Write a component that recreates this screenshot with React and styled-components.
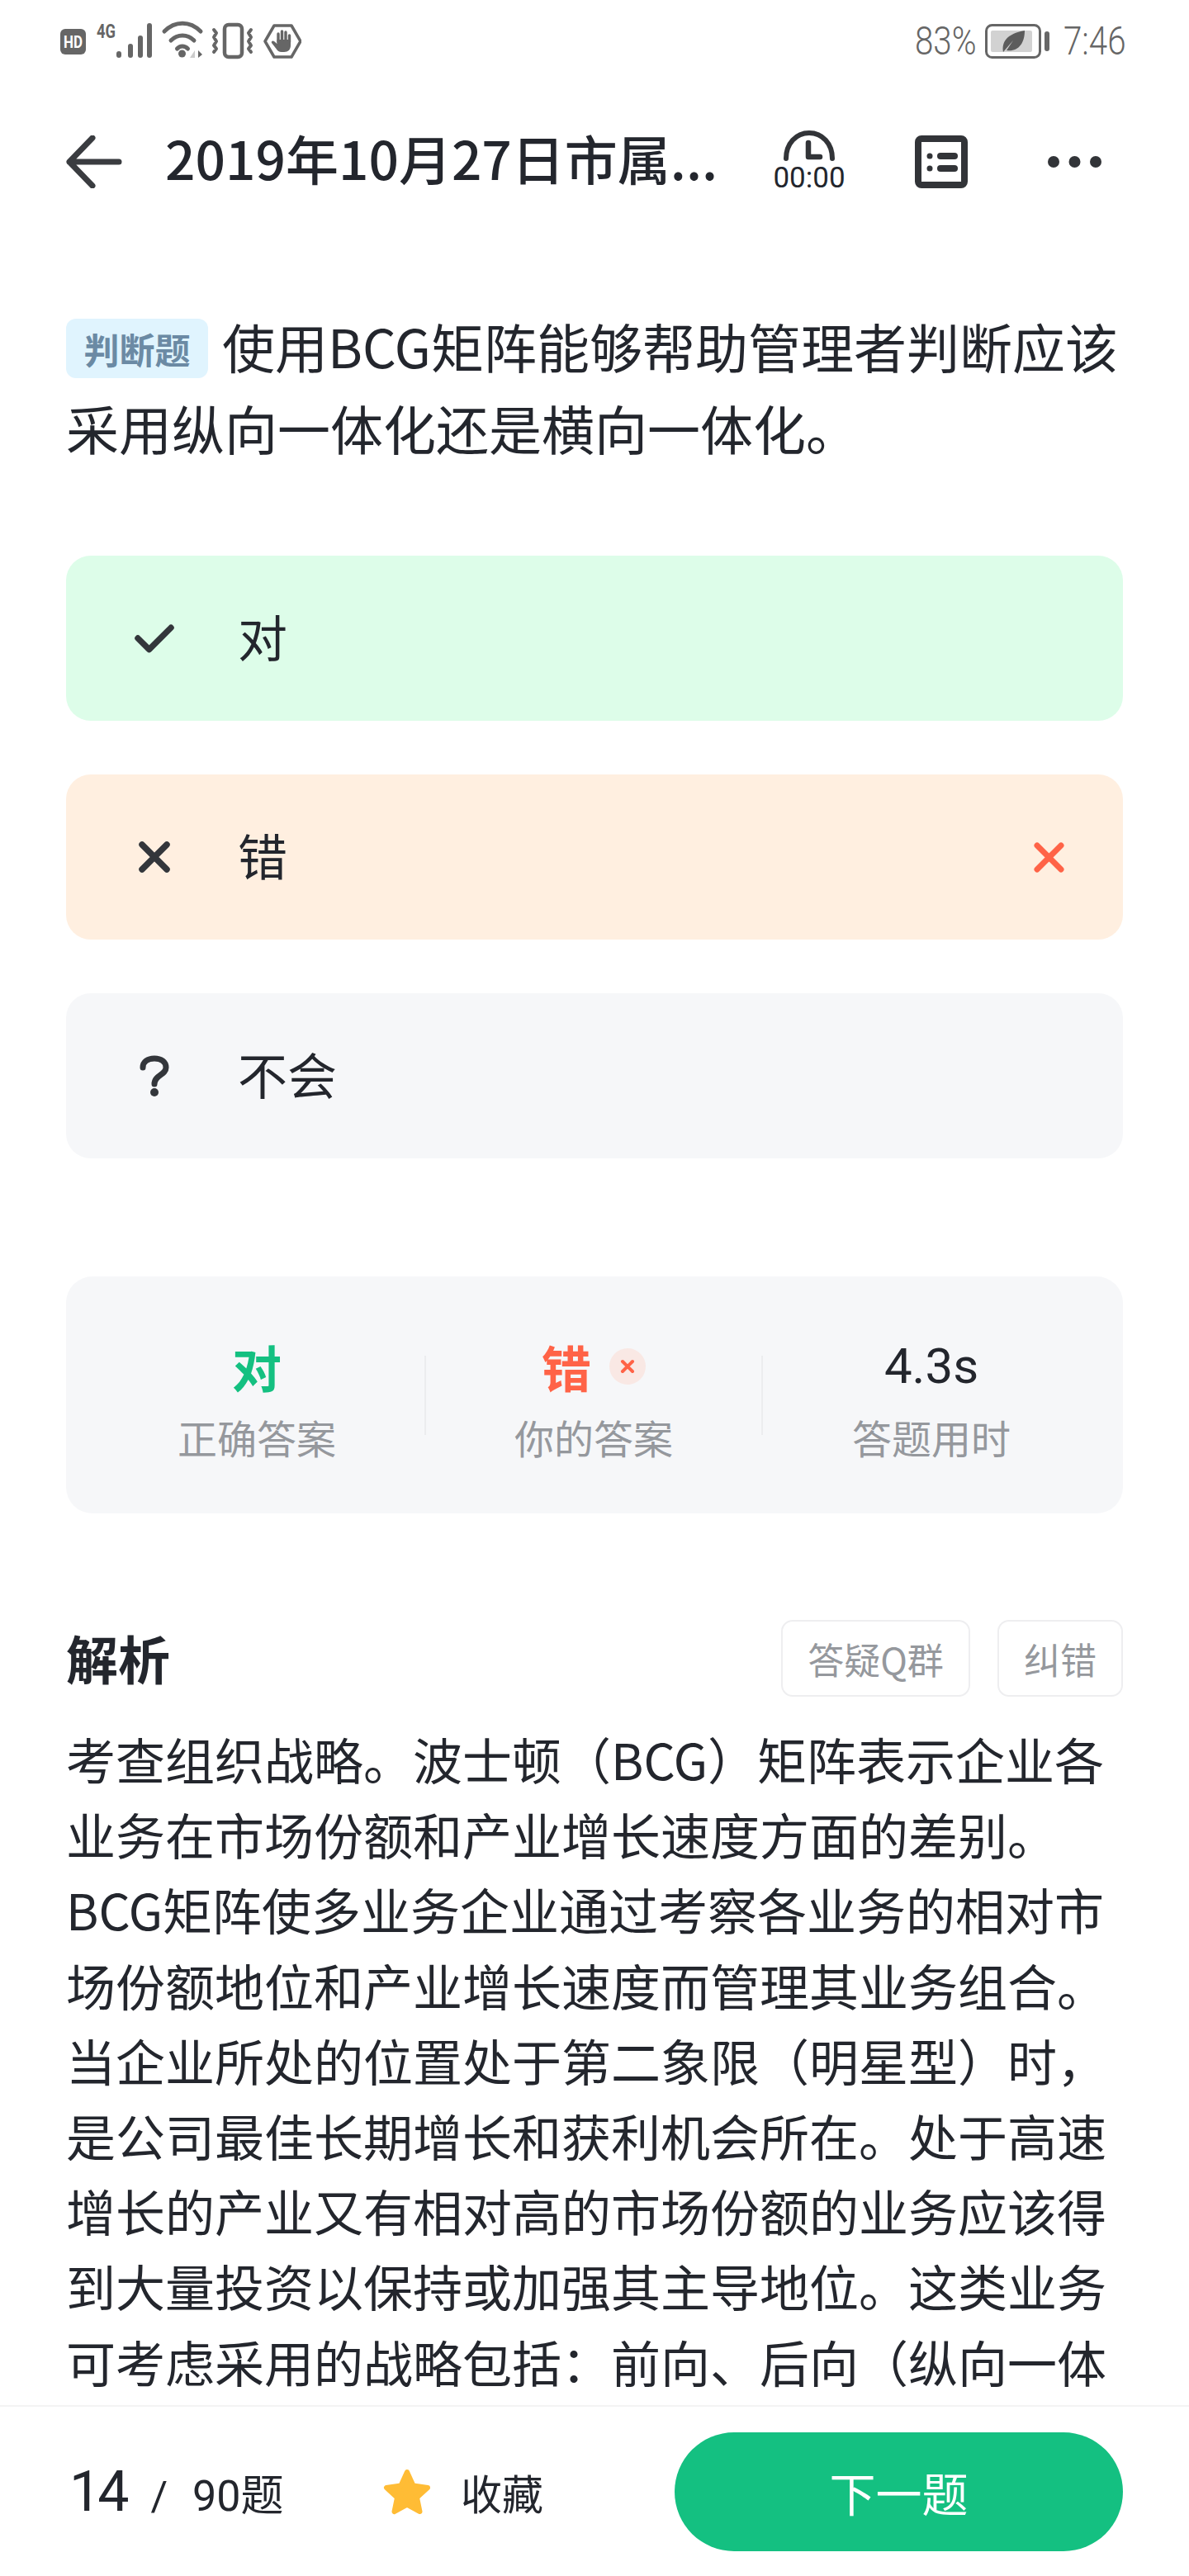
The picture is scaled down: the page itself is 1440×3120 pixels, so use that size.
import React from 'react';
import styled, { createGlobalStyle } from 'styled-components';

const GlobalStyle = createGlobalStyle`
    html, body {
        margin: 0;
        padding: 0;
        background: #fff;
    }
    * {
        box-sizing: border-box;
    }
`;

const Page = styled.div`
    width: 1440px;
    height: 3120px;
    display: flex;
    flex-direction: column;
    overflow: hidden;
    background: #fff;
    color: #23262d;
    font-family: "Noto Sans CJK SC", "Noto Sans", sans-serif;
`;

const StatusBar = styled.div`
    height: 100px;
    flex: none;
    display: flex;
    justify-content: space-between;
    align-items: flex-start;
    padding: 18px 76px 0 73px;
    color: #666;
`;
const StatusIcons = styled.div`
    display: flex;
    align-items: flex-start;
`;
const StatusRight = styled.div`
    display: flex;
    align-items: center;
    height: 44px;
    margin-top: 10px;
`;
const StatusText = styled.span`
    display: block;
    width: ${(p) => p.$w}px;
    margin-left: ${(p) => p.$left || 0}px;
    font-family: Roboto, sans-serif;
    font-weight: 300;
    font-size: 48px;
    line-height: 44px;
    white-space: nowrap;
    transform: scaleX(0.84);
    transform-origin: left center;
`;
const BatteryWrap = styled.div`
    display: flex;
    margin-left: 10px;
`;

const Header = styled.div`
    height: 136px;
    flex: none;
    display: flex;
    align-items: center;
    padding: 56px 106px 0 80px;
`;
const Title = styled.div`
    margin: 0 0 12px 52px;
    width: 688px;
    font-size: 64px;
    font-weight: 500;
    line-height: 80px;
    white-space: nowrap;
`;
const TimerBox = styled.div`
    margin-left: 50px;
    width: 84px;
    display: flex;
    flex-direction: column;
    align-items: center;
`;
const TimerText = styled.div`
    font-family: Roboto, sans-serif;
    font-size: 35px;
    line-height: 36px;
    margin-top: 2px;
`;
const HeaderIcon = styled.div`
    margin-left: ${(p) => p.$left}px;
    display: flex;
`;

const Body = styled.div`
    flex: 1;
    min-height: 0;
    overflow: hidden;
    padding: 136px 80px 0;
`;

const Question = styled.div`
    font-size: 64px;
    line-height: 99px;
    height: 198px;
`;
const QuestionLine = styled.div`
    display: flex;
    align-items: center;
    height: 99px;
    white-space: nowrap;
`;
const QuestionText = styled.span`
    margin-top: -6px;
`;
const TypeTag = styled.span`
    display: flex;
    align-items: center;
    justify-content: center;
    flex: none;
    width: 172px;
    height: 72px;
    margin-right: 17px;
    border-radius: 12px;
    background: #e0f4fe;
    color: #6b8aa4;
    font-size: 43px;
    font-weight: 700;
    line-height: 72px;
`;

const Options = styled.div`
    display: flex;
    flex-direction: column;
    gap: 65px;
    margin-top: 103px;
`;
const Option = styled.div`
    height: 200px;
    display: flex;
    align-items: center;
    padding: 0 71px 0 83px;
    border-radius: 30px;
    background: ${(p) => p.$bg};
    font-size: 60px;
`;
const OptionIcon = styled.div`
    width: 48px;
    display: flex;
    justify-content: center;
    margin-right: 77px;
    color: #33363b;
`;
const OptionText = styled.div`
    flex: 1;
    margin-top: -8px;
`;

const Stats = styled.div`
    height: 287px;
    margin-top: 143px;
    display: grid;
    grid-template-columns: repeat(3, 408px);
    align-items: center;
    padding: 0 28px;
    border-radius: 32px;
    background: #f6f7f9;
`;
const StatCol = styled.div`
    height: 96px;
    display: flex;
    flex-direction: column;
    align-items: center;
    border-right: ${(p) => (p.$last ? 'none' : '2px solid #ecedef')};
`;
const StatValue = styled.div`
    flex: none;
    height: 80px;
    margin-top: -27px;
    display: flex;
    align-items: center;
    gap: 22px;
    font-size: 60px;
    font-weight: 700;
    color: ${(p) => p.$color};
    ${(p) => p.$plain && 'font-family: Roboto, sans-serif; font-weight: 400; font-size: 60px;'}
`;
const WrongDot = styled.span`
    width: 44px;
    height: 44px;
    display: flex;
    align-items: center;
    justify-content: center;
    border-radius: 50%;
    background: #f9e8e4;
`;
const StatLabel = styled.div`
    flex: none;
    margin-top: 14px;
    font-size: 48px;
    line-height: 62px;
    color: #95989d;
    white-space: nowrap;
`;

const SectionHead = styled.div`
    margin-top: 129px;
    height: 93px;
    display: flex;
    align-items: center;
`;
const SectionTitle = styled.div`
    flex: 1;
    margin-bottom: 4px;
    font-size: 63px;
    font-weight: 700;
`;
const LinkBtn = styled.div`
    width: ${(p) => p.$w}px;
    height: 93px;
    margin-left: ${(p) => p.$left || 0}px;
    display: flex;
    align-items: center;
    justify-content: center;
    border: 2px solid #eeeef0;
    border-radius: 14px;
    color: #95989d;
    font-size: 44px;
`;

const Analysis = styled.div`
    margin-top: 29px;
    font-size: 60px;
    line-height: 91.2px;
`;
const AnalysisLine = styled.div`
    white-space: nowrap;
`;

const BottomBar = styled.div`
    height: 207px;
    flex: none;
    display: flex;
    align-items: center;
    padding: 0 80px 0 84px;
    background: #fff;
    border-top: 2px solid #f3f3f3;
`;
const Progress = styled.div`
    width: 380px;
    display: flex;
    align-items: baseline;
    font-family: Roboto, sans-serif;
`;
const ProgressNow = styled.span`
    font-size: 68px;
    letter-spacing: -4px;
`;
const ProgressSlash = styled.span`
    font-size: 50px;
    margin: 0 30px;
`;
const ProgressTotal = styled.span`
    font-size: 52px;
    font-family: Roboto, "Noto Sans CJK SC", sans-serif;
`;
const Favorite = styled.div`
    flex: 1;
    display: flex;
    align-items: center;
    gap: 36px;
    font-size: 50px;
`;
const NextBtn = styled.div`
    width: 543px;
    height: 144px;
    display: flex;
    align-items: center;
    justify-content: center;
    border-radius: 72px;
    background: #14c081;
    color: #fff;
    font-size: 56px;
`;

const analysisLines = [
    '考查组织战略。波士顿（BCG）矩阵表示企业各',
    '业务在市场份额和产业增长速度方面的差别。',
    'BCG矩阵使多业务企业通过考察各业务的相对市',
    '场份额地位和产业增长速度而管理其业务组合。',
    '当企业所处的位置处于第二象限（明星型）时，',
    '是公司最佳长期增长和获利机会所在。处于高速',
    '增长的产业又有相对高的市场份额的业务应该得',
    '到大量投资以保持或加强其主导地位。这类业务',
    '可考虑采用的战略包括：前向、后向（纵向一体',
];

function StatusLeftIcons() {
    return (
        <StatusIcons>
            <svg width="292" height="64" viewBox="0 -10 292 64" fill="none">
                <rect x="0" y="7" width="31" height="31" rx="6" fill="#666" />
                <text x="15.5" y="29.5" fontFamily="Roboto" fontSize="20" fontWeight="700" fill="#fff" textAnchor="middle" textLength="23" lengthAdjust="spacingAndGlyphs">HD</text>
                <text x="44" y="18" fontFamily="Roboto" fontSize="24" fontWeight="700" fill="#666" textLength="23" lengthAdjust="spacingAndGlyphs">4G</text>
                <g fill="#666">
                    <rect x="68" y="34" width="6" height="8" rx="3" />
                    <rect x="82" y="25" width="6" height="17" rx="3" />
                    <rect x="94" y="15" width="6" height="27" rx="3" />
                    <rect x="105" y="0" width="6" height="42" rx="3" />
                </g>
                <g stroke="#666" strokeWidth="5" strokeLinecap="round">
                    <path d="M126 10c13-13 31-13 44 0" />
                    <path d="M134 21c8-8 20-8 28 0" />
                    <path d="M141.500 31c3.500-4 9-4 13 0" />
                </g>
                <circle cx="147.500" cy="37" r="4.500" fill="#666" />
                <path d="M163 42v-9l-6 9z" fill="#ccc" />
                <path d="M167 42v-9l5 5z" fill="#666" />
                <rect x="199" y="2" width="21" height="39" rx="5" stroke="#666" strokeWidth="4.500" />
                <path d="M186 8l3 4-3 5 3 5-3 5 3 4-3 4M231 8l-3 4 3 5-3 5 3 5-3 4 3 4" stroke="#666" strokeWidth="4" strokeLinecap="round" strokeLinejoin="round" />
                <path d="M259 3h21l11 19-11 19h-21l-11-19z" stroke="#666" strokeWidth="3.500" strokeLinejoin="round" />
                <path d="M264 23v-10M268.500 21V10M273 21V11M277.500 23V15" stroke="#666" strokeWidth="3.400" strokeLinecap="round" />
                <path d="M262.500 20h16.500v7c0 5-3 8-8 8h-3c-3 0-5-1.500-6.500-4l-5.500-7c-1-2 1.500-3.500 3-2l3.500 3z" fill="#666" />
            </svg>
        </StatusIcons>
    );
}

function BatteryIcon() {
    return (
        <svg width="79" height="42" viewBox="0 0 79 42" fill="none">
            <rect x="1.5" y="1.5" width="65" height="39" rx="7" stroke="#666" strokeWidth="3" />
            <rect x="7" y="8" width="50" height="26" rx="2" fill="#d2d2d2" />
            <rect x="72" y="9" width="6" height="24" rx="3" fill="#666" />
            <path d="M22 34c-2-12 4-22 26-26 0 16-8 26-22 24l8-12-12 14z" fill="#5c5c5c" />
        </svg>
    );
}

export default function App() {
    return (
        <Page>
            <GlobalStyle />
            <StatusBar>
                <StatusLeftIcons />
                <StatusRight>
                    <StatusText $w={75}>83%</StatusText>
                    <BatteryWrap>
                        <BatteryIcon />
                    </BatteryWrap>
                    <StatusText $w={76} $left={16}>7:46</StatusText>
                </StatusRight>
            </StatusBar>
            <Header>
                <svg width="68" height="64" viewBox="0 0 68 64" fill="none" stroke="#3a3c40" strokeWidth="7" strokeLinecap="round" strokeLinejoin="round">
                    <path d="M32 3L4 32l28 29M4 32h60" />
                </svg>
                <Title>2019年10月27日市属...</Title>
                <TimerBox>
                    <svg width="64" height="38" viewBox="0 0 64 38" fill="none" stroke="#323438" strokeLinecap="round" strokeLinejoin="round">
                        <path d="M4 34C4 16 16 3 32 3s28 13 28 31" strokeWidth="6" />
                        <path d="M31 15v17h14" strokeWidth="6.5" />
                    </svg>
                    <TimerText>00:00</TimerText>
                </TimerBox>
                <HeaderIcon $left={86}>
                    <svg width="64" height="64" viewBox="0 0 64 64" fill="none">
                        <rect x="4" y="4" width="56" height="56" rx="4" stroke="#323438" strokeWidth="8" />
                        <circle cx="18" cy="25" r="3.5" fill="#323438" />
                        <circle cx="18" cy="40" r="3.5" fill="#323438" />
                        <rect x="27" y="21" width="25" height="8" rx="4" fill="#323438" />
                        <rect x="27" y="36" width="25" height="8" rx="4" fill="#323438" />
                    </svg>
                </HeaderIcon>
                <HeaderIcon $left={97}>
                    <svg width="65" height="14" viewBox="0 0 65 14" fill="#323438">
                        <circle cx="7" cy="7" r="7" />
                        <circle cx="32.5" cy="7" r="7" />
                        <circle cx="58" cy="7" r="7" />
                    </svg>
                </HeaderIcon>
            </Header>
            <Body>
                <Question>
                    <QuestionLine>
                        <TypeTag>判断题</TypeTag>
                        <QuestionText>使用BCG矩阵能够帮助管理者判断应该</QuestionText>
                    </QuestionLine>
                    <QuestionLine>
                        <QuestionText>采用纵向一体化还是横向一体化。</QuestionText>
                    </QuestionLine>
                </Question>
                <Options>
                    <Option $bg="#ddfde9">
                        <OptionIcon>
                            <svg width="49" height="36" viewBox="0 0 49 36" fill="none" stroke="#33363b" strokeWidth="7.5" strokeLinecap="round" strokeLinejoin="round">
                                <path d="M4 18l14 14L45 5" />
                            </svg>
                        </OptionIcon>
                        <OptionText>对</OptionText>
                    </Option>
                    <Option $bg="#ffefe0">
                        <OptionIcon>
                            <svg width="38" height="38" viewBox="0 0 38 38" fill="none" stroke="#33363b" strokeWidth="7.5" strokeLinecap="round">
                                <path d="M4 4l30 30M34 4L4 34" />
                            </svg>
                        </OptionIcon>
                        <OptionText>错</OptionText>
                        <svg width="37" height="37" viewBox="0 0 37 37" fill="none" stroke="#ff6347" strokeWidth="7" strokeLinecap="round">
                            <path d="M4 4l29 29M33 4L4 33" />
                        </svg>
                    </Option>
                    <Option $bg="#f6f7f9">
                        <OptionIcon>
                            <svg width="36" height="50" viewBox="0 0 36 50" fill="none">
                                <path d="M4 15C4 8 10 4 18 4s14 4 14 11c0 9-14 9-14 20" stroke="#33363b" strokeWidth="7" strokeLinecap="round" />
                                <circle cx="18" cy="45" r="5" fill="#33363b" />
                            </svg>
                        </OptionIcon>
                        <OptionText>不会</OptionText>
                    </Option>
                </Options>
                <Stats>
                    <StatCol>
                        <StatValue $color="#14c081">对</StatValue>
                        <StatLabel>正确答案</StatLabel>
                    </StatCol>
                    <StatCol>
                        <StatValue $color="#ff6347">
                            错
                            <WrongDot>
                                <svg width="18" height="18" viewBox="0 0 18 18" fill="none" stroke="#ff6347" strokeWidth="4" strokeLinecap="round">
                                    <path d="M3 3l12 12M15 3L3 15" />
                                </svg>
                            </WrongDot>
                        </StatValue>
                        <StatLabel>你的答案</StatLabel>
                    </StatCol>
                    <StatCol $last>
                        <StatValue $color="#23262d" $plain>4.3s</StatValue>
                        <StatLabel>答题用时</StatLabel>
                    </StatCol>
                </Stats>
                <SectionHead>
                    <SectionTitle>解析</SectionTitle>
                    <LinkBtn $w={229}>答疑Q群</LinkBtn>
                    <LinkBtn $w={152} $left={33}>纠错</LinkBtn>
                </SectionHead>
                <Analysis>
                    {analysisLines.map((line) => (
                        <AnalysisLine key={line}>{line}</AnalysisLine>
                    ))}
                </Analysis>
            </Body>
            <BottomBar>
                <Progress>
                    <ProgressNow>14</ProgressNow>
                    <ProgressSlash>/</ProgressSlash>
                    <ProgressTotal>90题</ProgressTotal>
                </Progress>
                <Favorite>
                    <svg width="58" height="56" viewBox="0 0 58 56" fill="#ffbc35" stroke="#ffbc35" strokeWidth="6" strokeLinejoin="round">
                        <path d="M29 4l7.5 16.5L54 23 41 35l3.5 17L29 43.5 13.5 52 17 35 4 23l17.5-2.5z" />
                    </svg>
                    收藏
                </Favorite>
                <NextBtn>下一题</NextBtn>
            </BottomBar>
        </Page>
    );
}
